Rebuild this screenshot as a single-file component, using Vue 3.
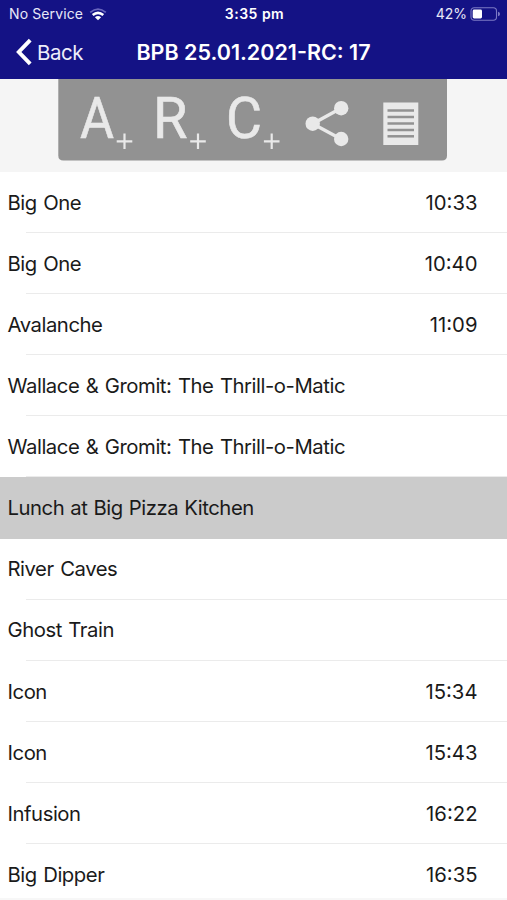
<script setup>
const rows = [
  { name: 'Big One', time: '10:33' },
  { name: 'Big One', time: '10:40' },
  { name: 'Avalanche', time: '11:09' },
  { name: 'Wallace & Gromit: The Thrill-o-Matic' },
  { name: 'Wallace & Gromit: The Thrill-o-Matic' },
  { name: 'Lunch at Big Pizza Kitchen', active: true },
  { name: 'River Caves' },
  { name: 'Ghost Train' },
  { name: 'Icon', time: '15:34' },
  { name: 'Icon', time: '15:43' },
  { name: 'Infusion', time: '16:22' },
  { name: 'Big Dipper', time: '16:35' },
]
const letters = [
  { char: 'A', x: 22, width: 34, plus: 66.5 },
  { char: 'R', x: 95, width: 34.5, plus: 140 },
  { char: 'C', x: 168, width: 36, plus: 213.7 },
]
const textLines = [31.5, 38, 44.5, 51, 57.3]
</script>

<template>
  <div class="screen">
    <header class="header">
      <div class="status">
        <div class="carrier">
          <span>No Service</span>
          <svg class="wifi" width="18" height="13" viewBox="0 0 18 13" fill="none">
            <path d="M1.2 4.4Q9-2.2 16.8 4.4" stroke="#6966bd" stroke-width="1.7" />
            <path d="M3.7 7Q9 2.6 14.3 7" stroke="#fff" stroke-width="2.6" />
            <path d="M9 12.3 5.9 9.2Q9 6.8 12.1 9.2Z" fill="#fff" />
          </svg>
        </div>
        <span class="clock">3:35 pm</span>
        <div class="power">
          <span>42%</span>
          <svg width="31" height="14" viewBox="0 0 31 14">
            <rect x="1" y="0.8" width="25.5" height="12.4" rx="3.2" fill="none" stroke="#7b79c4" stroke-width="1.1" />
            <rect x="2.7" y="2.5" width="9.3" height="9" rx="1.4" fill="#fff" />
            <path d="M28 4.7Q30 5.3 30 7T28 9.3Z" fill="#7b79c4" />
          </svg>
        </div>
      </div>
      <div class="nav">
        <div class="back">
          <svg width="17" height="28" viewBox="0 0 17 28" fill="none">
            <path d="M15.2 2.2 3.8 14 15.2 25.8" stroke="#fff" stroke-width="3.9" />
          </svg>
          <span>Back</span>
        </div>
        <h1 class="title">BPB 25.01.2021-RC: 17</h1>
      </div>
    </header>

    <section class="tools">
      <svg class="panel" width="389" height="82" viewBox="0 0 389 82">
        <path d="M0.3 0H389V76.5Q389 81.5 384 81.5H5.3Q0.3 81.5 0.3 76.5Z" fill="#929292" />
        <g v-for="l in letters" :key="l.char">
          <text class="letter" :x="l.x" y="59.3" :textLength="l.width" lengthAdjust="spacingAndGlyphs">{{ l.char }}</text>
          <path :d="`M${l.plus - 7.8} 62.3h15.6M${l.plus} 54.5v15.6`" stroke="#e9e9e9" stroke-width="2.2" />
        </g>
        <g fill="#e9e9e9">
          <path d="M283 29.3 254.7 44.7 283 60" fill="none" stroke="#e9e9e9" stroke-width="3.4" />
          <circle cx="254.7" cy="44.7" r="7.2" />
          <circle cx="283.2" cy="29.2" r="7.2" />
          <circle cx="283.2" cy="60" r="7.2" />
          <rect x="325.3" y="23.5" width="35" height="42.5" />
        </g>
        <path v-for="y in textLines" :key="y" :d="`M329.5 ${y}h26.5`" stroke="#929292" stroke-width="2.5" />
      </svg>
    </section>

    <ul class="list">
      <li v-for="(row, i) in rows" :key="i" class="row" :class="{ active: row.active }">
        <span class="name">{{ row.name }}</span>
        <span v-if="row.time" class="time">{{ row.time }}</span>
      </li>
    </ul>
    <div class="edge"></div>
  </div>
</template>

<style>
body {
  margin: 0;
  background: #fff;
}
</style>

<style scoped>
.screen {
  position: relative;
  width: 507px;
  height: 900px;
  overflow: hidden;
  background: #fff;
  font-family: Inter, "Liberation Sans", sans-serif;
  color: #1a1a1a;
}
.header {
  height: 79px;
  background: #141285;
  color: #fff;
}
.status {
  display: grid;
  grid-template-columns: 1fr auto 1fr;
  align-items: center;
  height: 28px;
  padding: 0 6px 0 9px;
  font-size: 14px;
  line-height: 28px;
  color: #e8e8f8;
}
.carrier {
  display: flex;
  align-items: center;
  gap: 6px;
  letter-spacing: 0.12px;
}
.clock {
  font-weight: 600;
  letter-spacing: 0.5px;
  margin-right: 1px;
  color: #fff;
}
.power {
  display: flex;
  align-items: center;
  justify-content: flex-end;
  gap: 3px;
}
.nav {
  display: grid;
  grid-template-columns: 1fr auto 1fr;
  align-items: center;
  height: 48px;
  padding-left: 15px;
  padding-right: 15px;
}
.back {
  display: flex;
  align-items: center;
  gap: 5px;
  font-size: 20.5px;
  line-height: 25px;
  letter-spacing: -0.5px;
  color: #ededfa;
}
.title {
  margin: 0;
  font-size: 21.5px;
  font-weight: 600;
}
.tools {
  height: 93px;
  padding-left: 58px;
  background: #f5f5f5;
}
.panel {
  display: block;
}
.letter {
  font-family: Roboto, sans-serif;
  font-size: 57.5px;
  fill: #e9e9e9;
  stroke: #e9e9e9;
  stroke-width: 0.6px;
}
.list {
  margin: 0;
  padding: 0;
  list-style: none;
}
.row {
  display: flex;
  align-items: center;
  justify-content: space-between;
  box-sizing: border-box;
  height: 61.1px;
  padding: 0.5px 29.5px 0 7.5px;
  background: linear-gradient(#ebebeb, #ebebeb) 26px 100% / 100% 1px no-repeat;
  font-size: 20.3px;
  line-height: 24px;
}
.name {
  letter-spacing: -0.45px;
  word-spacing: 1.2px;
}
.row.active .name {
  letter-spacing: -0.45px;
  word-spacing: 0.8px;
}
.row.active {
  background: #cbcbcb;
}
.edge {
  position: absolute;
  left: 0;
  right: 0;
  bottom: 0;
  height: 2px;
  background: #f7f7f7;
}
</style>
